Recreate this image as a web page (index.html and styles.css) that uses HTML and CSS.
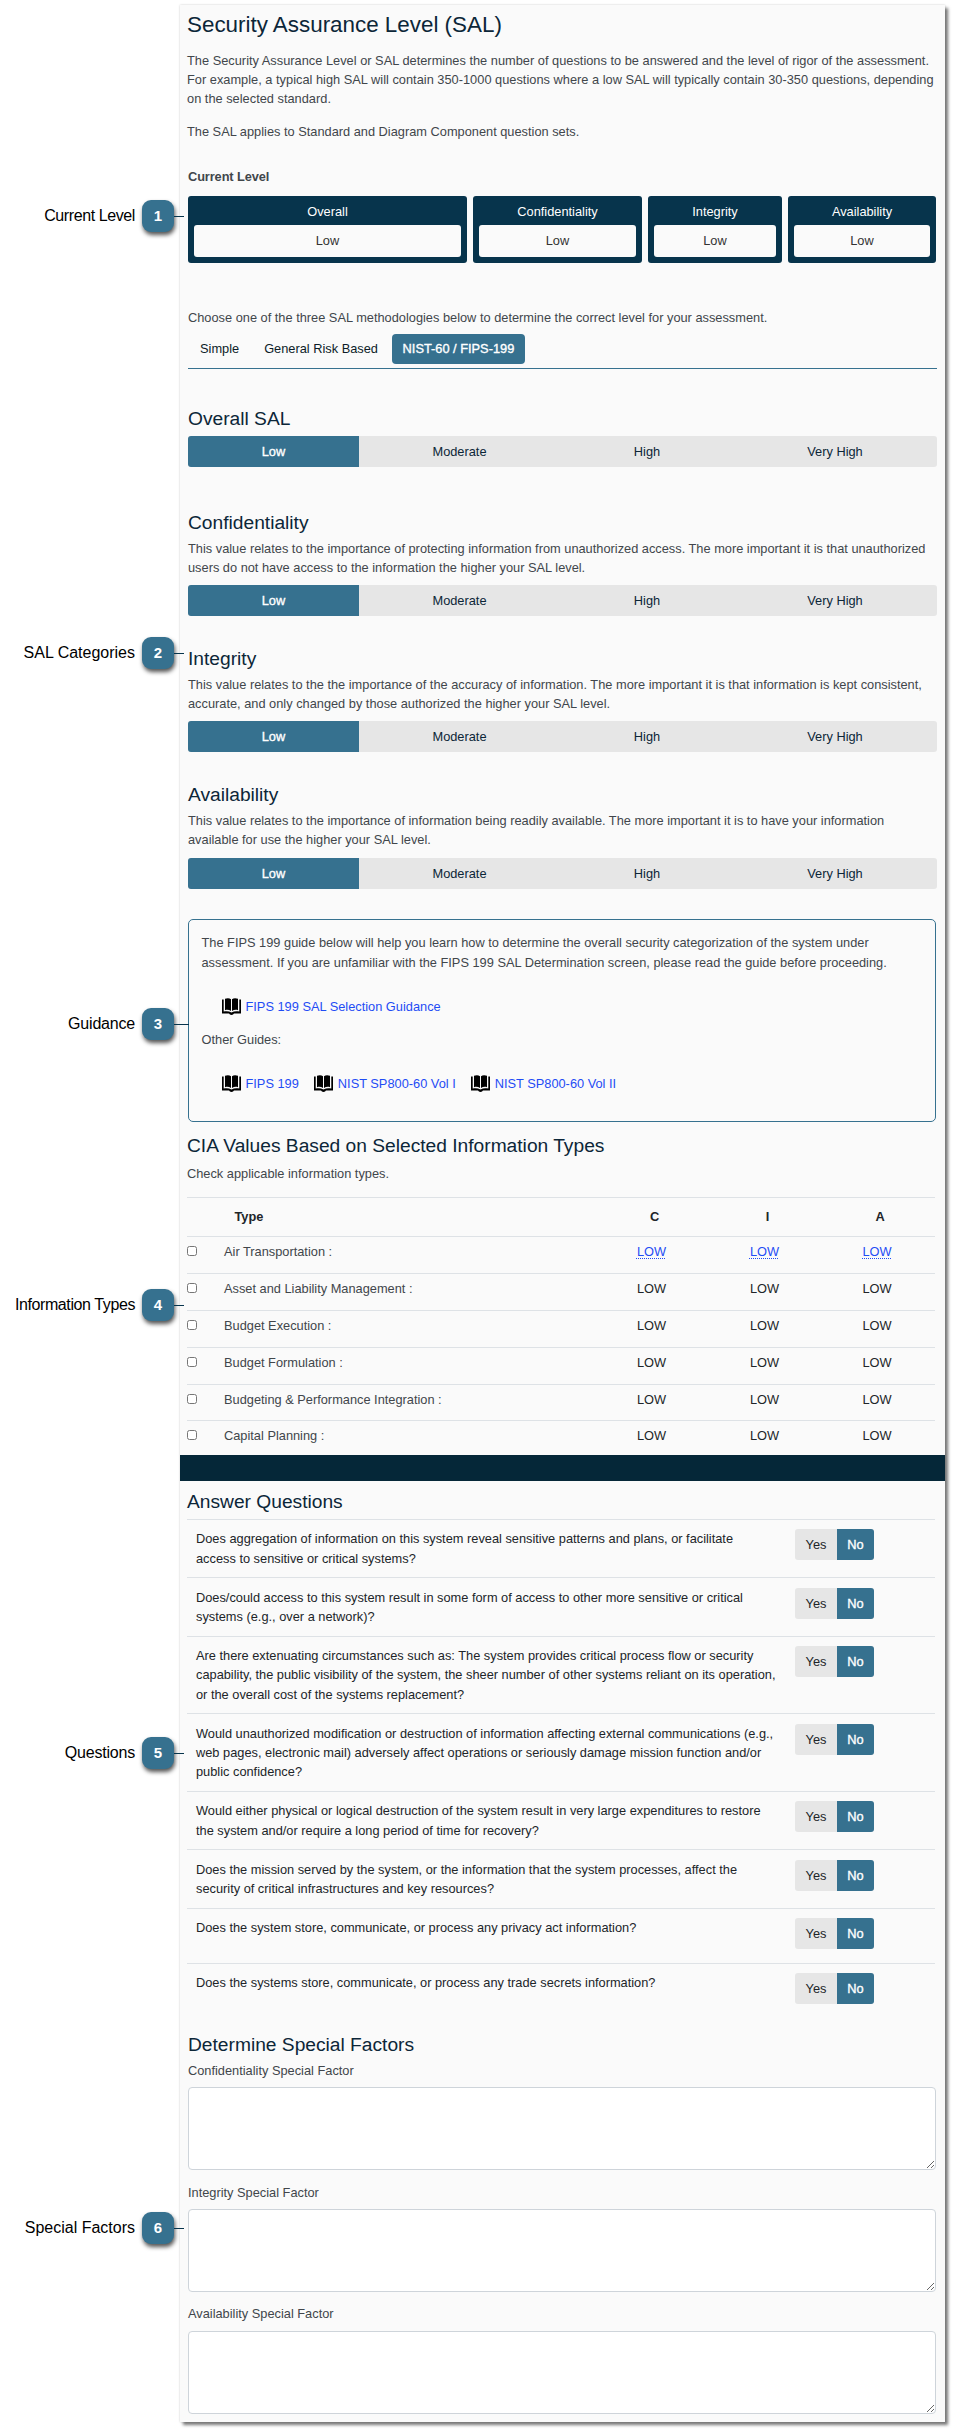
FILE: index.html
```html
<!DOCTYPE html>
<html lang="en">
<head>
<meta charset="utf-8">
<title>Security Assurance Level (SAL)</title>
<link rel="stylesheet" href="styles.css">
</head>
<body>
<svg class="defs" width="0" height="0"><symbol id="book" viewBox="0 0 19 17"><path d="M3 .8C5 0 7.500 0 9 1.200V13C7.200 11.800 5 11.600 3 12.200zM10 1.200C11.500 0 14 0 16 .8V12.200C14 11.600 11.800 11.800 10 13z"/><path d="M0 1.500H1.700V13.600C4.500 13 7 13.200 9.500 14.500 12 13.200 14.500 13 17.300 13.600V1.500H19V15.500H12C11.300 16 11 17 9.500 17S7.700 16 7 15.500H0z"/></symbol></svg>
<main class="panel">
  <h1 class="title">Security Assurance Level (SAL)</h1>
  <p class="text intro">The Security Assurance Level or SAL determines the number of questions to be answered and the level of rigor of the assessment.<br>For example, a typical high SAL will contain 350-1000 questions where a low SAL will typically contain 30-350 questions, depending<br>on the selected standard.</p>
  <p class="text applies">The SAL applies to Standard and Diagram Component question sets.</p>
  <h2 class="current">Current Level</h2>
  <div class="levels">
    <div class="level">Overall<span class="level-value">Low</span></div>
    <div class="level">Confidentiality<span class="level-value">Low</span></div>
    <div class="level">Integrity<span class="level-value">Low</span></div>
    <div class="level">Availability<span class="level-value">Low</span></div>
  </div>
  <p class="text choose">Choose one of the three SAL methodologies below to determine the correct level for your assessment.</p>
  <nav class="tabs"><a class="tab">Simple</a><a class="tab tab-mid">General Risk Based</a><a class="tab tab-active">NIST-60 / FIPS-199</a></nav>

  <section class="sal overall"><h3 class="heading">Overall SAL</h3>
    <div class="bar"><b>Low</b><span>Moderate</span><span>High</span><span>Very High</span></div></section>
  <section class="sal confidentiality"><h3 class="heading">Confidentiality</h3>
    <p class="text">This value relates to the importance of protecting information from unauthorized access. The more important it is that unauthorized<br>users do not have access to the information the higher your SAL level.</p>
    <div class="bar"><b>Low</b><span>Moderate</span><span>High</span><span>Very High</span></div></section>
  <section class="sal"><h3 class="heading">Integrity</h3>
    <p class="text">This value relates to the the importance of the accuracy of information. The more important it is that information is kept consistent,<br>accurate, and only changed by those authorized the higher your SAL level.</p>
    <div class="bar"><b>Low</b><span>Moderate</span><span>High</span><span>Very High</span></div></section>
  <section class="sal"><h3 class="heading">Availability</h3>
    <p class="text">This value relates to the importance of information being readily available. The more important it is to have your information<br>available for use the higher your SAL level.</p>
    <div class="bar"><b>Low</b><span>Moderate</span><span>High</span><span>Very High</span></div></section>

  <section class="guide">
    <p class="text">The FIPS 199 guide below will help you learn how to determine the overall security categorization of the system under<br>assessment. If you are unfamiliar with the FIPS 199 SAL Determination screen, please read the guide before proceeding.</p>
    <div class="links"><a><svg class="book"><use href="#book"/></svg>FIPS 199 SAL Selection Guidance</a></div>
    <p class="text">Other Guides:</p>
    <div class="links links-other"><a><svg class="book"><use href="#book"/></svg>FIPS 199</a><a><svg class="book"><use href="#book"/></svg>NIST SP800-60 Vol I</a><a><svg class="book"><use href="#book"/></svg>NIST SP800-60 Vol II</a></div>
  </section>

  <h3 class="heading cia">CIA Values Based on Selected Information Types</h3>
  <p class="text check">Check applicable information types.</p>
  <div class="types">
    <div class="type type-head"><span></span><span>Type</span><span>C</span><span>I</span><span>A</span></div>
    <div class="type"><input type="checkbox"><span class="name">Air Transportation :</span><span><a>LOW</a></span><span><a>LOW</a></span><span><a>LOW</a></span></div>
    <div class="type"><input type="checkbox"><span class="name">Asset and Liability Management :</span><span>LOW</span><span>LOW</span><span>LOW</span></div>
    <div class="type"><input type="checkbox"><span class="name">Budget Execution :</span><span>LOW</span><span>LOW</span><span>LOW</span></div>
    <div class="type"><input type="checkbox"><span class="name">Budget Formulation :</span><span>LOW</span><span>LOW</span><span>LOW</span></div>
    <div class="type"><input type="checkbox"><span class="name">Budgeting &amp; Performance Integration :</span><span>LOW</span><span>LOW</span><span>LOW</span></div>
    <div class="type"><input type="checkbox"><span class="name">Capital Planning :</span><span>LOW</span><span>LOW</span><span>LOW</span></div>
  </div>
  <div class="band"></div>

  <h3 class="heading answer">Answer Questions</h3>
  <div class="questions">
    <div class="question"><p>Does aggregation of information on this system reveal sensitive patterns and plans, or facilitate<br>access to sensitive or critical systems?</p><div class="yn"><span>Yes</span><b>No</b></div></div>
    <div class="question"><p>Does/could access to this system result in some form of access to other more sensitive or critical<br>systems (e.g., over a network)?</p><div class="yn"><span>Yes</span><b>No</b></div></div>
    <div class="question"><p>Are there extenuating circumstances such as: The system provides critical process flow or security<br>capability, the public visibility of the system, the sheer number of other systems reliant on its operation,<br>or the overall cost of the systems replacement?</p><div class="yn"><span>Yes</span><b>No</b></div></div>
    <div class="question"><p>Would unauthorized modification or destruction of information affecting external communications (e.g.,<br>web pages, electronic mail) adversely affect operations or seriously damage mission function and/or<br>public confidence?</p><div class="yn"><span>Yes</span><b>No</b></div></div>
    <div class="question"><p>Would either physical or logical destruction of the system result in very large expenditures to restore<br>the system and/or require a long period of time for recovery?</p><div class="yn"><span>Yes</span><b>No</b></div></div>
    <div class="question"><p>Does the mission served by the system, or the information that the system processes, affect the<br>security of critical infrastructures and key resources?</p><div class="yn"><span>Yes</span><b>No</b></div></div>
    <div class="question"><p>Does the system store, communicate, or process any privacy act information?</p><div class="yn"><span>Yes</span><b>No</b></div></div>
    <div class="question"><p>Does the systems store, communicate, or process any trade secrets information?</p><div class="yn"><span>Yes</span><b>No</b></div></div>
  </div>

  <h3 class="heading determine">Determine Special Factors</h3>
  <div class="factors">
    <label class="factor">Confidentiality Special Factor<textarea></textarea></label>
    <label class="factor">Integrity Special Factor<textarea></textarea></label>
    <label class="factor">Availability Special Factor<textarea></textarea></label>
  </div>
</main>
<div class="callout c1"><span>Current Level</span><b>1</b><i></i></div>
<div class="callout c2"><span>SAL Categories</span><b>2</b><i></i></div>
<div class="callout c3"><span>Guidance</span><b>3</b><i></i></div>
<div class="callout c4"><span>Information Types</span><b>4</b><i></i></div>
<div class="callout c5"><span>Questions</span><b>5</b><i></i></div>
<div class="callout c6"><span>Special Factors</span><b>6</b><i></i></div>
</body>
</html>
```
FILE: styles.css
```css
* { box-sizing: border-box; }
html { background: #fff; }
body {
  position: relative;
  margin: 0;
  padding: 5px 0 0 180px;
  height: 2431px;
  overflow: hidden;
  font: 12.8px/19.2px "Liberation Sans", Arial, sans-serif;
  color: #41464b;
  white-space: nowrap;
}
.defs { position: absolute; }
h1, h2, h3, p { margin: 0; font-weight: 400; }
b { font-weight: 700; }

.panel {
  width: 765px;
  height: 2417px;
  padding: 0 8px;
  background: #fafafa;
  box-shadow: 3px 3px 3px #777, 0 0 2px #ccc;
  display: flow-root;
}
.title { margin: 7px 0 14px -1px; font-size: 22.4px; line-height: 25px; color: #0c2638; }
.text { font-size: 12.8px; }
.intro, .applies { margin-left: -1px; }
.intro { letter-spacing: .01px; }
.applies { margin-top: 13.4px; }
.current { margin-top: 25.800px; font-size: 12.8px; font-weight: 700; letter-spacing: -.1px; }
.levels { display: grid; grid-template-columns: 279px 169px 134px 148px; gap: 6px; margin-top: 9.800px; }
.level {
  height: 67px;
  padding: 5.500px 6px 0;
  border-radius: 3px;
  background: #07344c;
  color: #fff;
  text-align: center;
}
.level-value {
  display: block;
  height: 32px;
  margin-top: 4.300px;
  padding-top: 6px;
  border-radius: 3px;
  background: #fafafa;
  color: #333;
}
.choose { margin-top: 44.800px; }
.tabs {
  display: flex;
  height: 35.400px;
  margin-top: 6.600px;
  border-bottom: 1px solid #36718f;
  color: #0c1c28;
}
.tab { height: 30px; line-height: 29px; padding-left: 12px; }
.tab-mid { padding-left: 25px; }
.tab-active { width: 133px; margin-left: 14px; padding: 0; border-radius: 4px; background: #36718f; color: #fff; text-align: center; }
.tab-active, .bar b, .yn b { font-weight: 400; -webkit-text-stroke: .35px #fff; }

.heading { font-size: 19.2px; line-height: 23px; color: #0c2638; }
.sal { height: 136.200px; }
.sal.overall { height: 103.800px; margin-top: 38px; }
.sal.overall .bar { margin-top: 6px; }
.sal .text { margin-top: 5px; }
.bar {
  display: grid;
  grid-template-columns: 171px 201px 174px 202px;
  height: 31px;
  margin-top: 8px;
  border-radius: 3px;
  overflow: hidden;
  background: #e6e6e6;
  color: #0c2638;
  line-height: 31px;
  text-align: center;
}
.bar b, .yn b { background: #36718f; color: #fff; }

.guide {
  width: 748px;
  height: 203px;
  margin: 0 0 0 -.500px;
  padding: 13px 13px 0;
  border: 1px solid #36718f;
  border-radius: 5px;
}
.links { display: flex; gap: 15px; padding-left: 20px; margin: 25px 0 13px; color: #1f4cf5; }
.links a { display: flex; align-items: center; gap: 5px; height: 20px; }
.links-other { margin-top: 25px; }
.book { width: 19px; height: 17px; }

.cia { margin: 12px 0 0 -1px; }
.check { margin: 7px 0 0 -1px; }
.types { margin: 13.400px 0 0 -1px; height: 258px; overflow: hidden; width: 748px; }
.type {
  display: grid;
  grid-template-columns: 37px 371px 113px 113px 112px;
  align-items: start;
  height: 36.800px;
  padding-top: 5px;
  border-top: 1px solid #dee2e6;
  color: #212529;
}
.type span:nth-child(n+3) { text-align: center; }
.type input { width: 10px; height: 10px; margin: 4px 0 0; }
.name { color: #41464b; }
.type a { color: #1f4cf5; text-decoration: underline dotted 1px; text-underline-offset: 2px; }
.type-head { height: 39.500px; padding-top: 9px; font-weight: 700; }
.type-head span:nth-child(2) { padding-left: 10.500px; }
.type-head span:nth-child(n+3) { padding-left: 6px; }
.band { height: 26px; margin: 0 -8px; background: #052738; }

.answer { margin: 9px 0 0 -1px; }
.questions { width: 748px; margin: 6px 0 0 -1px; }
.question {
  display: grid;
  grid-template-columns: 599px auto;
  align-items: start;
  min-height: 55px;
  padding: 9.500px 9px;
  border-top: 1px solid #dee2e6;
  color: #212529;
}
.yn {
  display: grid;
  grid-template-columns: 42px 37px;
  width: 79px;
  height: 31px;
  border-radius: 3px;
  overflow: hidden;
  background: #e6e6e6;
  line-height: 31px;
  text-align: center;
}
.determine { margin-top: 15px; }
.factors { margin-top: 5px; }
.factor { display: block; height: 121.800px; }
.factor textarea {
  display: block;
  width: 748px;
  height: 83px;
  margin: 7px 0 0;
  border: 1px solid #ced4da;
  border-radius: 4px;
  background: #fff;
}

/* Numbered callouts pinned over the panel edge */
.callout { position: absolute; left: 0; display: flex; align-items: center; height: 32px; font-size: 16px; color: #000; }
.callout span { width: 135px; text-align: right; }
.callout b {
  width: 32px;
  height: 32px;
  margin-left: 7px;
  border-radius: 9px;
  background: #36718f;
  box-shadow: 1px 3px 4px #555;
  color: #fff;
  font-size: 15px;
  line-height: 32px;
  text-align: center;
}
.callout i { width: 10px; height: 1px; background: #07344c; }
.c1 { top: 200px; }
.c1 span, .c4 span { letter-spacing: -.4px; }
.c2 { top: 637px; }
.c3 { top: 1008px; }
.c3 i { width: 15px; }
.c3 span, .c5 span { letter-spacing: -.2px; }
.c4 { top: 1289px; }
.c5 { top: 1737px; }
.c6 { top: 2212px; }
```
